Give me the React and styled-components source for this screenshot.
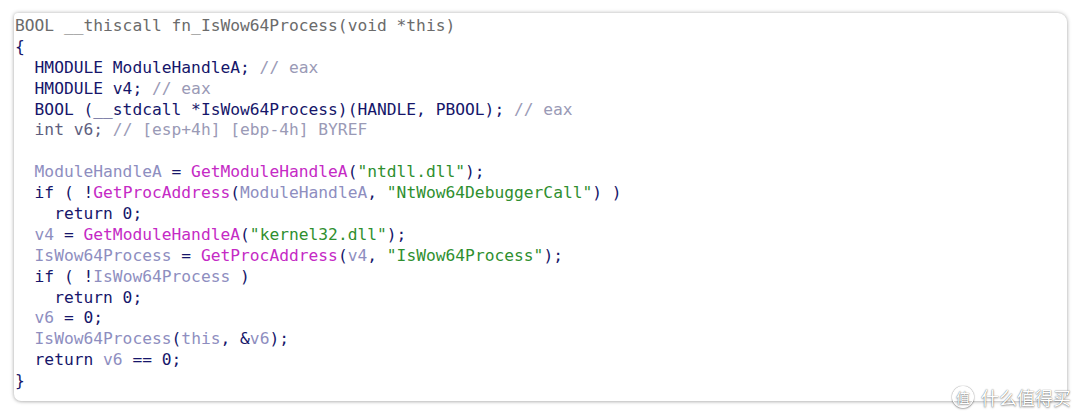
import styled, { createGlobalStyle } from "styled-components";

const GlobalStyle = createGlobalStyle`
  html, body {
    margin: 0;
    padding: 0;
    background: #ffffff;
  }
`;

const colors = {
  h: "#6b6b6b",
  k: "#16166a",
  v: "#8e8ebf",
  f: "#c52ac5",
  s: "#2f8f2f",
  c: "#9a9ab6",
  m: "#5e5e7e",
};

const Page = styled.div`
  position: relative;
  width: 1080px;
  height: 415px;
  padding: 13px 13px 14px 14px;
  box-sizing: border-box;
`;

const Card = styled.pre`
  margin: 0;
  height: 388px;
  box-sizing: border-box;
  background: #fff;
  border-radius: 4px 9px 9px 7px;
  box-shadow: 0 0 4px rgba(0, 0, 0, 0.28), 0 1px 3px rgba(0, 0, 0, 0.12);
  padding: 3px 0 0 1px;
  font-family: "DejaVu Sans Mono", "Liberation Mono", monospace;
  font-size: 16.25px;
  line-height: 20.9px;
  color: ${colors.k};
`;

const Line = styled.div`
  height: 20.9px;
  white-space: pre;
`;

const T = styled.span`
  color: ${(p) => colors[p.$t] || colors.k};
`;

const Watermark = styled.div`
  position: absolute;
  right: 9px;
  bottom: 7px;
  display: flex;
  align-items: center;
  gap: 7px;
  font-family: "Noto Sans CJK SC", sans-serif;
  font-size: 18px;
  line-height: 22px;
  color: #fff;
  text-shadow: 0 0 1px rgba(0, 0, 0, 0.6), 0 1px 2px rgba(0, 0, 0, 0.35);
`;

const Badge = styled.span`
  width: 20px;
  height: 20px;
  border-radius: 50%;
  border: 1.5px solid #fff;
  box-shadow: 0 0 1px rgba(0, 0, 0, 0.6), 0 1px 2px rgba(0, 0, 0, 0.3);
  display: flex;
  align-items: center;
  justify-content: center;
  font-size: 14px;
`;

const code = [
  [["h", "BOOL __thiscall fn_IsWow64Process(void *this)"]],
  [["k", "{"]],
  [["k", "  HMODULE ModuleHandleA; "], ["c", "// eax"]],
  [["k", "  HMODULE v4; "], ["c", "// eax"]],
  [["k", "  BOOL (__stdcall *IsWow64Process)(HANDLE, PBOOL); "], ["c", "// eax"]],
  [["m", "  int v6; "], ["c", "// [esp+4h] [ebp-4h] BYREF"]],
  [],
  [["v", "  ModuleHandleA"], ["k", " = "], ["f", "GetModuleHandleA"], ["k", "("], ["s", "\"ntdll.dll\""], ["k", ");"]],
  [["k", "  if ( !"], ["f", "GetProcAddress"], ["k", "("], ["v", "ModuleHandleA"], ["k", ", "], ["s", "\"NtWow64DebuggerCall\""], ["k", ") )"]],
  [["k", "    return 0;"]],
  [["v", "  v4"], ["k", " = "], ["f", "GetModuleHandleA"], ["k", "("], ["s", "\"kernel32.dll\""], ["k", ");"]],
  [["v", "  IsWow64Process"], ["k", " = "], ["f", "GetProcAddress"], ["k", "("], ["v", "v4"], ["k", ", "], ["s", "\"IsWow64Process\""], ["k", ");"]],
  [["k", "  if ( !"], ["v", "IsWow64Process"], ["k", " )"]],
  [["k", "    return 0;"]],
  [["v", "  v6"], ["k", " = 0;"]],
  [["v", "  IsWow64Process"], ["k", "("], ["v", "this"], ["k", ", &"], ["v", "v6"], ["k", ");"]],
  [["k", "  return "], ["v", "v6"], ["k", " == 0;"]],
  [["k", "}"]],
];

export default function App() {
  return (
    <>
      <GlobalStyle />
      <Page>
        <Card>
          {code.map((line, i) => (
            <Line key={i}>
              {line.map(([t, text], j) => (
                <T key={j} $t={t}>
                  {text}
                </T>
              ))}
            </Line>
          ))}
        </Card>
        <Watermark>
          <Badge>值</Badge>
          <span>什么值得买</span>
        </Watermark>
      </Page>
    </>
  );
}
